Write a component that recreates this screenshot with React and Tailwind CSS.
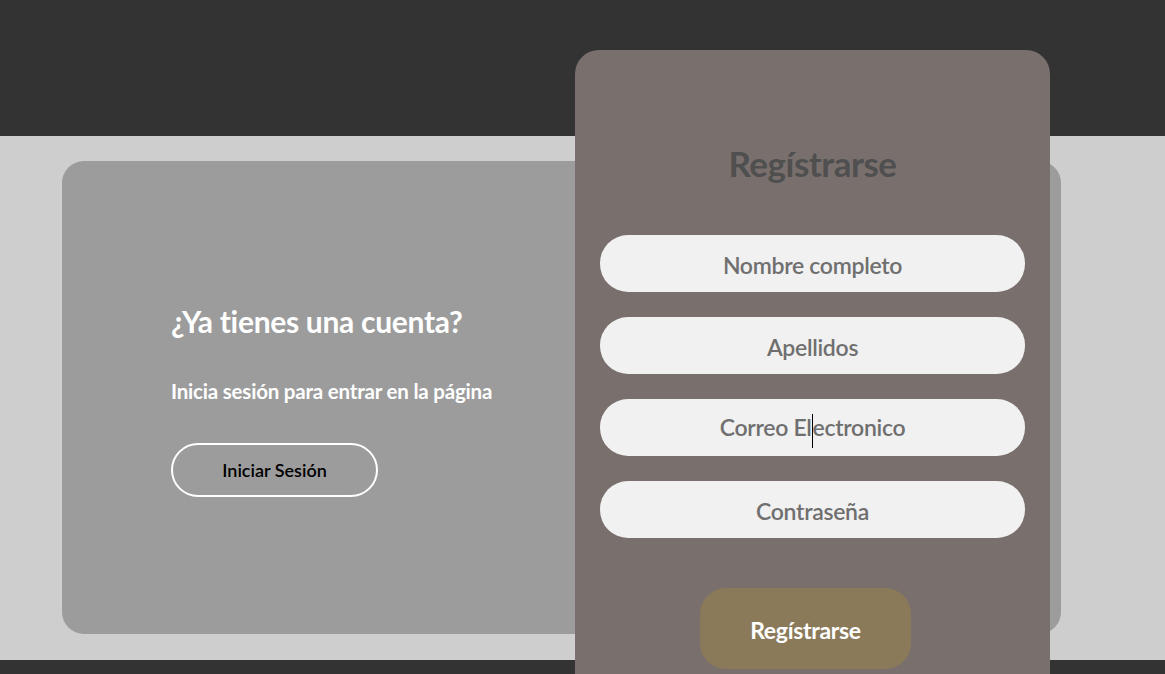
export default function App() {
  const font = { fontFamily: "Lato, 'Open Sans', sans-serif" };
  return (
    <div className="relative w-[1165px] h-[674px] overflow-hidden bg-[#333333]" style={font}>
      <div className="h-[136px] bg-[#333333]" />
      <div className="h-[524px] bg-[#cecece] pt-[25px] pl-[62px]">
        <div className="w-[999px] h-[473px] rounded-[22px] bg-[#9c9c9c] pl-[109px] pt-[140px]">
          <h2 className="text-[30px] font-bold text-white leading-[40px] tracking-[-0.3px]">¿Ya tienes una cuenta?</h2>
          <p className="mt-[38px] text-[20.5px] font-bold text-white leading-[24px] tracking-[-0.2px]">Inicia sesión para entrar en la página</p>
          <button className="mt-[40px] w-[207px] h-[54px] rounded-full border-2 border-white text-[18px] font-semibold text-black flex items-center justify-center pt-[1px]">
            Iniciar Sesión
          </button>
        </div>
      </div>
      <div className="h-[14px] bg-[#333333]" />

      <div className="absolute left-[575px] top-[50px] w-[475px] h-[660px] rounded-[24px] bg-[#796f6d] px-[25px] pt-[88px]">
        <h1 className="text-center text-[35px] font-bold text-[#4f4f4f] leading-[50px] tracking-[-0.5px]">Regístrarse</h1>
        <div className="mt-[47px] flex flex-col gap-[25px]">
          {["Nombre completo", "Apellidos", "Correo Electronico", "Contraseña"].map((t) => (
            <div key={t} className="h-[57px] rounded-[28px] bg-[#f1f1f1] flex items-center justify-center pt-[3px] text-[23px] font-semibold text-[#6f6f6f] tracking-[-0.3px]">
              {t === "Correo Electronico" ? (
                <span>
                  Correo El<span className="inline-block align-middle w-px h-[34px] bg-black" />ectronico
                </span>
              ) : (
                t
              )}
            </div>
          ))}
        </div>
        <div className="mt-[50px] pl-[100px]">
          <button className="w-[211px] h-[81px] rounded-[26px] bg-[#8b7a5a] text-white text-[23px] font-bold tracking-[-0.3px] pt-[3px]">
            Regístrarse
          </button>
        </div>
      </div>
    </div>
  );
}
